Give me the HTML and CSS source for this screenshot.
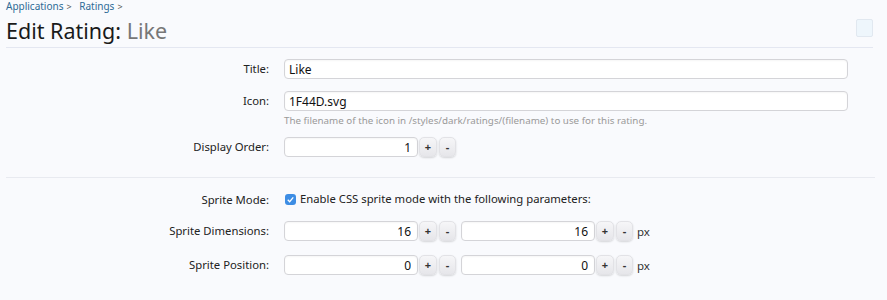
FILE: index.html
```html
<!DOCTYPE html>
<html lang="en">
<head>
    <meta charset="UTF-8">
    <title>Edit Rating: Like</title>
    <link rel="stylesheet" href="styles.css">
</head>
<body>
    <div class="page">
        <div class="crumbs">
            <a href="#">Applications</a><span class="sep">&gt;</span>
            <a href="#">Ratings</a><span class="sep">&gt;</span>
        </div>
        <div class="titlebar">
            <h1>Edit Rating: <em>Like</em></h1>
            <span class="topbox"></span>
        </div>

        <form class="form">
            <div class="section">
                <div class="row">
                    <label class="label">Title:</label>
                    <div class="field"><input class="text wide" type="text" value="Like"></div>
                </div>
                <div class="row">
                    <label class="label">Icon:</label>
                    <div class="field">
                        <input class="text wide" type="text" value="1F44D.svg">
                        <p class="hint">The filename of the icon in /styles/dark/ratings/(filename) to use for this rating.</p>
                    </div>
                </div>
                <div class="row">
                    <label class="label">Display Order:</label>
                    <div class="field spin">
                        <input class="text num" type="text" value="1">
                        <button type="button" class="btn">+</button>
                        <button type="button" class="btn">-</button>
                    </div>
                </div>
            </div>

            <div class="section second">
                <div class="row check-row">
                    <label class="label">Sprite Mode:</label>
                    <div class="field">
                        <label class="check"><span class="box"><svg viewBox="0 0 12 12"><path d="M3 6.3 L5.1 8.4 L9 3.6" /></svg></span>Enable CSS sprite mode with the following parameters:</label>
                    </div>
                </div>
                <div class="row">
                    <label class="label">Sprite Dimensions:</label>
                    <div class="field spin">
                        <input class="text num" type="text" value="16">
                        <button type="button" class="btn">+</button>
                        <button type="button" class="btn">-</button>
                        <input class="text num" type="text" value="16">
                        <button type="button" class="btn">+</button>
                        <button type="button" class="btn">-</button>
                        <span class="unit">px</span>
                    </div>
                </div>
                <div class="row">
                    <label class="label">Sprite Position:</label>
                    <div class="field spin">
                        <input class="text num" type="text" value="0">
                        <button type="button" class="btn">+</button>
                        <button type="button" class="btn">-</button>
                        <input class="text num" type="text" value="0">
                        <button type="button" class="btn">+</button>
                        <button type="button" class="btn">-</button>
                        <span class="unit">px</span>
                    </div>
                </div>
            </div>
        </form>
    </div>
</body>
</html>
```

FILE: styles.css
```css
body {
    margin: 0;
    background-color: #f9fafd;
    font-family: "Noto Sans", sans-serif;
    font-size: 11px;
    color: #222;
}
.page {
    padding: 0 14px 0 6px;
}
.crumbs {
    height: 14px;
    line-height: 13px;
    font-size: 10px;
}
.crumbs a {
    color: #2e6a96;
    text-decoration: none;
}
.crumbs .sep {
    color: #555;
    font-size: 9px;
    margin: 0 5px 0 3px;
}
.titlebar {
    display: flex;
    align-items: center;
    justify-content: space-between;
    height: 33px;
    border-bottom: 1px solid #e4e7f1;
}
h1 {
    margin: 0;
    font-weight: normal;
    font-size: 21.5px;
    line-height: 26px;
    color: #1a1a1a;
}
h1 em {
    font-style: normal;
    color: #777;
}
.topbox {
    width: 15px;
    height: 16px;
    margin-bottom: 6px;
    border: 1px solid #e1e8f0;
    border-radius: 2px;
    background-color: #eef6fc;
}
.section {
    padding: 11px 27px 20px 0;
    border-bottom: 1px solid #e8eaf0;
    margin-right: -2px;
}
.section.second {
    border-bottom: none;
    padding-top: 12px;
}
.row {
    display: grid;
    grid-template-columns: 263px 1fr;
    column-gap: 15px;
    margin-bottom: 12px;
}
.second .row {
    margin-bottom: 14px;
}
.row:last-child,
.second .row:last-child {
    margin-bottom: 0;
}
.label {
    text-align: right;
    line-height: 20px;
    font-size: 11.3px;
    color: #222;
}
.second .check-row {
    margin-bottom: 11px;
}
.field.spin {
    display: flex;
    align-items: center;
}
.text {
    box-sizing: border-box;
    height: 20px;
    border: 1px solid #d4d4d8;
    border-radius: 4px;
    background-color: #fff;
    box-shadow: inset 0 1px 2px rgba(0, 0, 0, 0.04);
    font-family: "Noto Sans", sans-serif;
    font-size: 12px;
    color: #111;
    padding: 0 4px;
    outline: none;
}
.text.wide {
    width: 100%;
}
.text.num {
    width: 134px;
    text-align: right;
    padding-right: 6px;
}
.btn {
    box-sizing: border-box;
    width: 18px;
    height: 20px;
    margin-left: 1px;
    padding: 0;
    border: 1px solid #e2e2e6;
    border-radius: 5px;
    background: linear-gradient(#f6f6f8, #e6e6ea);
    box-shadow: 0 1px 2px rgba(0, 0, 0, 0.15);
    font-family: "Noto Sans", sans-serif;
    font-size: 11px;
    font-weight: bold;
    color: #333;
    line-height: 16px;
}
.btn + .btn {
    margin-left: 2px;
    width: 17px;
}
.btn + .btn + .text {
    margin-left: 5px;
}
.unit {
    margin-left: 4px;
    font-size: 11.5px;
    color: #333;
}
.hint {
    margin: 4px 0 -2px;
    font-size: 9.8px;
    line-height: 12px;
    color: #999;
}
.check {
    display: flex;
    align-items: center;
    line-height: 18px;
    font-size: 11.3px;
}
.check .box {
    width: 11px;
    height: 11px;
    margin: 0 4px 0 1px;
    border-radius: 3px;
    background-color: #3d8de4;
    display: flex;
}
.check .box svg {
    width: 11px;
    height: 11px;
    fill: none;
    stroke: #fff;
    stroke-width: 1.4;
}
```
